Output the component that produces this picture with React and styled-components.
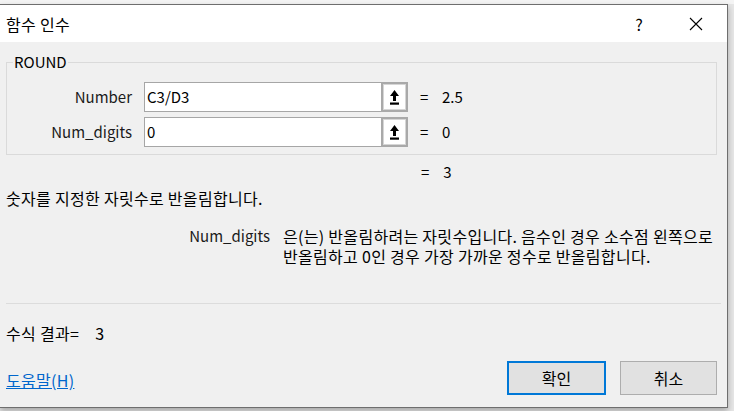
import * as React from 'react';
import styled, { createGlobalStyle } from 'styled-components';

const GlobalStyle = createGlobalStyle`
    html, body {
        margin: 0;
        padding: 0;
        background: #e9e9e9;
        font-family: "Noto Sans CJK KR", "Noto Sans", sans-serif;
        font-size: 15px;
        color: #000;
    }
`;

const Desktop = styled.div`
    width: 734px;
    height: 411px;
    overflow: hidden;
    background: linear-gradient(#f4f4f4 0 4px, #e6e6e6 4px);
`;

const Window = styled.div`
    margin-top: 4px;
    width: 727px;
    height: 402px;
    border: 1px solid #6e6e6e;
    border-left: none;
    background: #f0f0f0;
    box-shadow: 0 3px 6px rgba(0, 0, 0, 0.28);
    display: flex;
    flex-direction: column;
`;

const TitleBar = styled.div`
    height: 37px;
    flex: none;
    background: #fff;
    display: flex;
    align-items: center;
    padding-left: 6px;
`;

const Title = styled.div`
    flex: 1;
    font-size: 16px;
    letter-spacing: 0.3px;
    line-height: 20px;
`;

const TitleButton = styled.div`
    width: 46px;
    height: 37px;
    display: flex;
    align-items: center;
    justify-content: center;
    font-size: 16px;
    margin-right: ${(p) => p.$mr || 0}px;
`;

const Body = styled.div`
    flex: 1;
    display: flex;
    flex-direction: column;
    padding: 10px 10px 0 6px;
`;

const Group = styled.fieldset`
    margin: 0;
    padding: 10px 0 7px 0;
    border: 1px solid #dadada;
    min-width: 0;
`;

const Legend = styled.legend`
    margin-left: 6px;
    padding: 0 1px;
    line-height: 20px;
    font-size: 15px;
`;

const ParamRow = styled.div`
    display: grid;
    grid-template-columns: 125px 264px 10px auto;
    column-gap: 12px;
    align-items: center;
    height: 30px;
    margin-top: ${(p) => (p.$first ? 0 : 5)}px;
`;

const Label = styled.div`
    text-align: right;
    color: #1a1a1a;
    line-height: 20px;
`;

const Field = styled.div`
    display: flex;
    height: 30px;
`;

const Input = styled.div`
    flex: 1;
    background: #fff;
    border: 1px solid #a6a6a6;
    border-right: none;
    padding-left: 2px;
    display: flex;
    align-items: center;
    line-height: 20px;
`;

const RefButton = styled.div`
    width: 23px;
    height: 26px;
    border: 2px solid #a9a9a9;
    box-shadow: inset 0 0 0 1px #d6d6d6;
    background: #fff;
    display: flex;
    align-items: center;
    justify-content: center;
`;

const Eq = styled.span`
    line-height: 20px;
`;

const Val = styled.span`
    line-height: 20px;
`;

const ResultLine = styled.div`
    display: flex;
    gap: 14px;
    padding-left: 415px;
    margin-top: 7px;
    line-height: 20px;
`;

const KoreanText = styled.div`
    font-size: 16px;
    letter-spacing: 0.3px;
    line-height: 20px;
`;

const Desc = styled(KoreanText)`
    margin-top: 6px;
`;

const HelpBlock = styled.div`
    display: grid;
    grid-template-columns: 264px 440px;
    column-gap: 13px;
    align-items: start;
    margin-top: 18px;
`;

const HelpLine = styled(KoreanText)`
    height: 20px;
    white-space: nowrap;
`;

const Divider = styled.div`
    margin-top: 37px;
    margin-right: -4px;
    height: 1px;
    background: #dcdcdc;
`;

const FormulaResult = styled(KoreanText)`
    margin-top: 19px;
    display: flex;
    gap: 16px;
`;

const Footer = styled.div`
    margin-top: 18px;
    display: flex;
    align-items: center;
`;

const HelpLink = styled.a`
    flex: 1;
    color: #0066cc;
    text-decoration: underline;
    font-size: 16px;
    letter-spacing: 0.3px;
    line-height: 20px;
    padding-top: 3px;
    cursor: pointer;
`;

const Button = styled.button`
    width: ${(p) => (p.$primary ? 99 : 97)}px;
    height: 34px;
    margin-left: ${(p) => (p.$primary ? 0 : 14)}px;
    background: #e1e1e1;
    border: ${(p) => (p.$primary ? '2px solid #0078d7' : '1px solid #adadad')};
    font-family: inherit;
    font-size: 16px;
    color: #000;
    padding: 0;
`;

function RefIcon() {
    return (
        <svg width="11" height="17" viewBox="0 0 11 17">
            <polygon points="5.5,1 10,7 7,7 7,12 4,12 4,7 1,7" fill="#000" />
            <rect x="1" y="13.5" width="9" height="2.2" fill="#000" />
        </svg>
    );
}

function CloseIcon() {
    return (
        <svg width="14" height="14" viewBox="0 0 14 14">
            <path d="M1 1 L13 13 M13 1 L1 13" stroke="#000" strokeWidth="1.1" fill="none" />
        </svg>
    );
}

const params = [
    { name: 'Number', value: 'C3/D3', result: '2.5' },
    { name: 'Num_digits', value: '0', result: '0' },
];

const helpLines = [
    '은(는) 반올림하려는 자릿수입니다. 음수인 경우 소수점 왼쪽으로',
    '반올림하고 0인 경우 가장 가까운 정수로 반올림합니다.',
];

export default function App() {
    return (
        <Desktop>
            <GlobalStyle />
            <Window>
                <TitleBar>
                    <Title>함수 인수</Title>
                    <TitleButton $mr={11}>?</TitleButton>
                    <TitleButton $mr={8}><CloseIcon /></TitleButton>
                </TitleBar>
                <Body>
                    <Group>
                        <Legend>ROUND</Legend>
                        {params.map((p, i) => (
                            <ParamRow key={p.name} $first={i === 0}>
                                <Label>{p.name}</Label>
                                <Field>
                                    <Input>{p.value}</Input>
                                    <RefButton><RefIcon /></RefButton>
                                </Field>
                                <Eq>=</Eq>
                                <Val>{p.result}</Val>
                            </ParamRow>
                        ))}
                    </Group>
                    <ResultLine>
                        <Eq>=</Eq>
                        <Val>3</Val>
                    </ResultLine>
                    <Desc>숫자를 지정한 자릿수로 반올림합니다.</Desc>
                    <HelpBlock>
                        <Label>Num_digits</Label>
                        <div>
                            {helpLines.map((line) => (
                                <HelpLine key={line}>{line}</HelpLine>
                            ))}
                        </div>
                    </HelpBlock>
                    <Divider />
                    <FormulaResult>
                        <span>수식 결과=</span>
                        <span>3</span>
                    </FormulaResult>
                    <Footer>
                        <HelpLink>도움말(H)</HelpLink>
                        <Button $primary>확인</Button>
                        <Button>취소</Button>
                    </Footer>
                </Body>
            </Window>
        </Desktop>
    );
}
